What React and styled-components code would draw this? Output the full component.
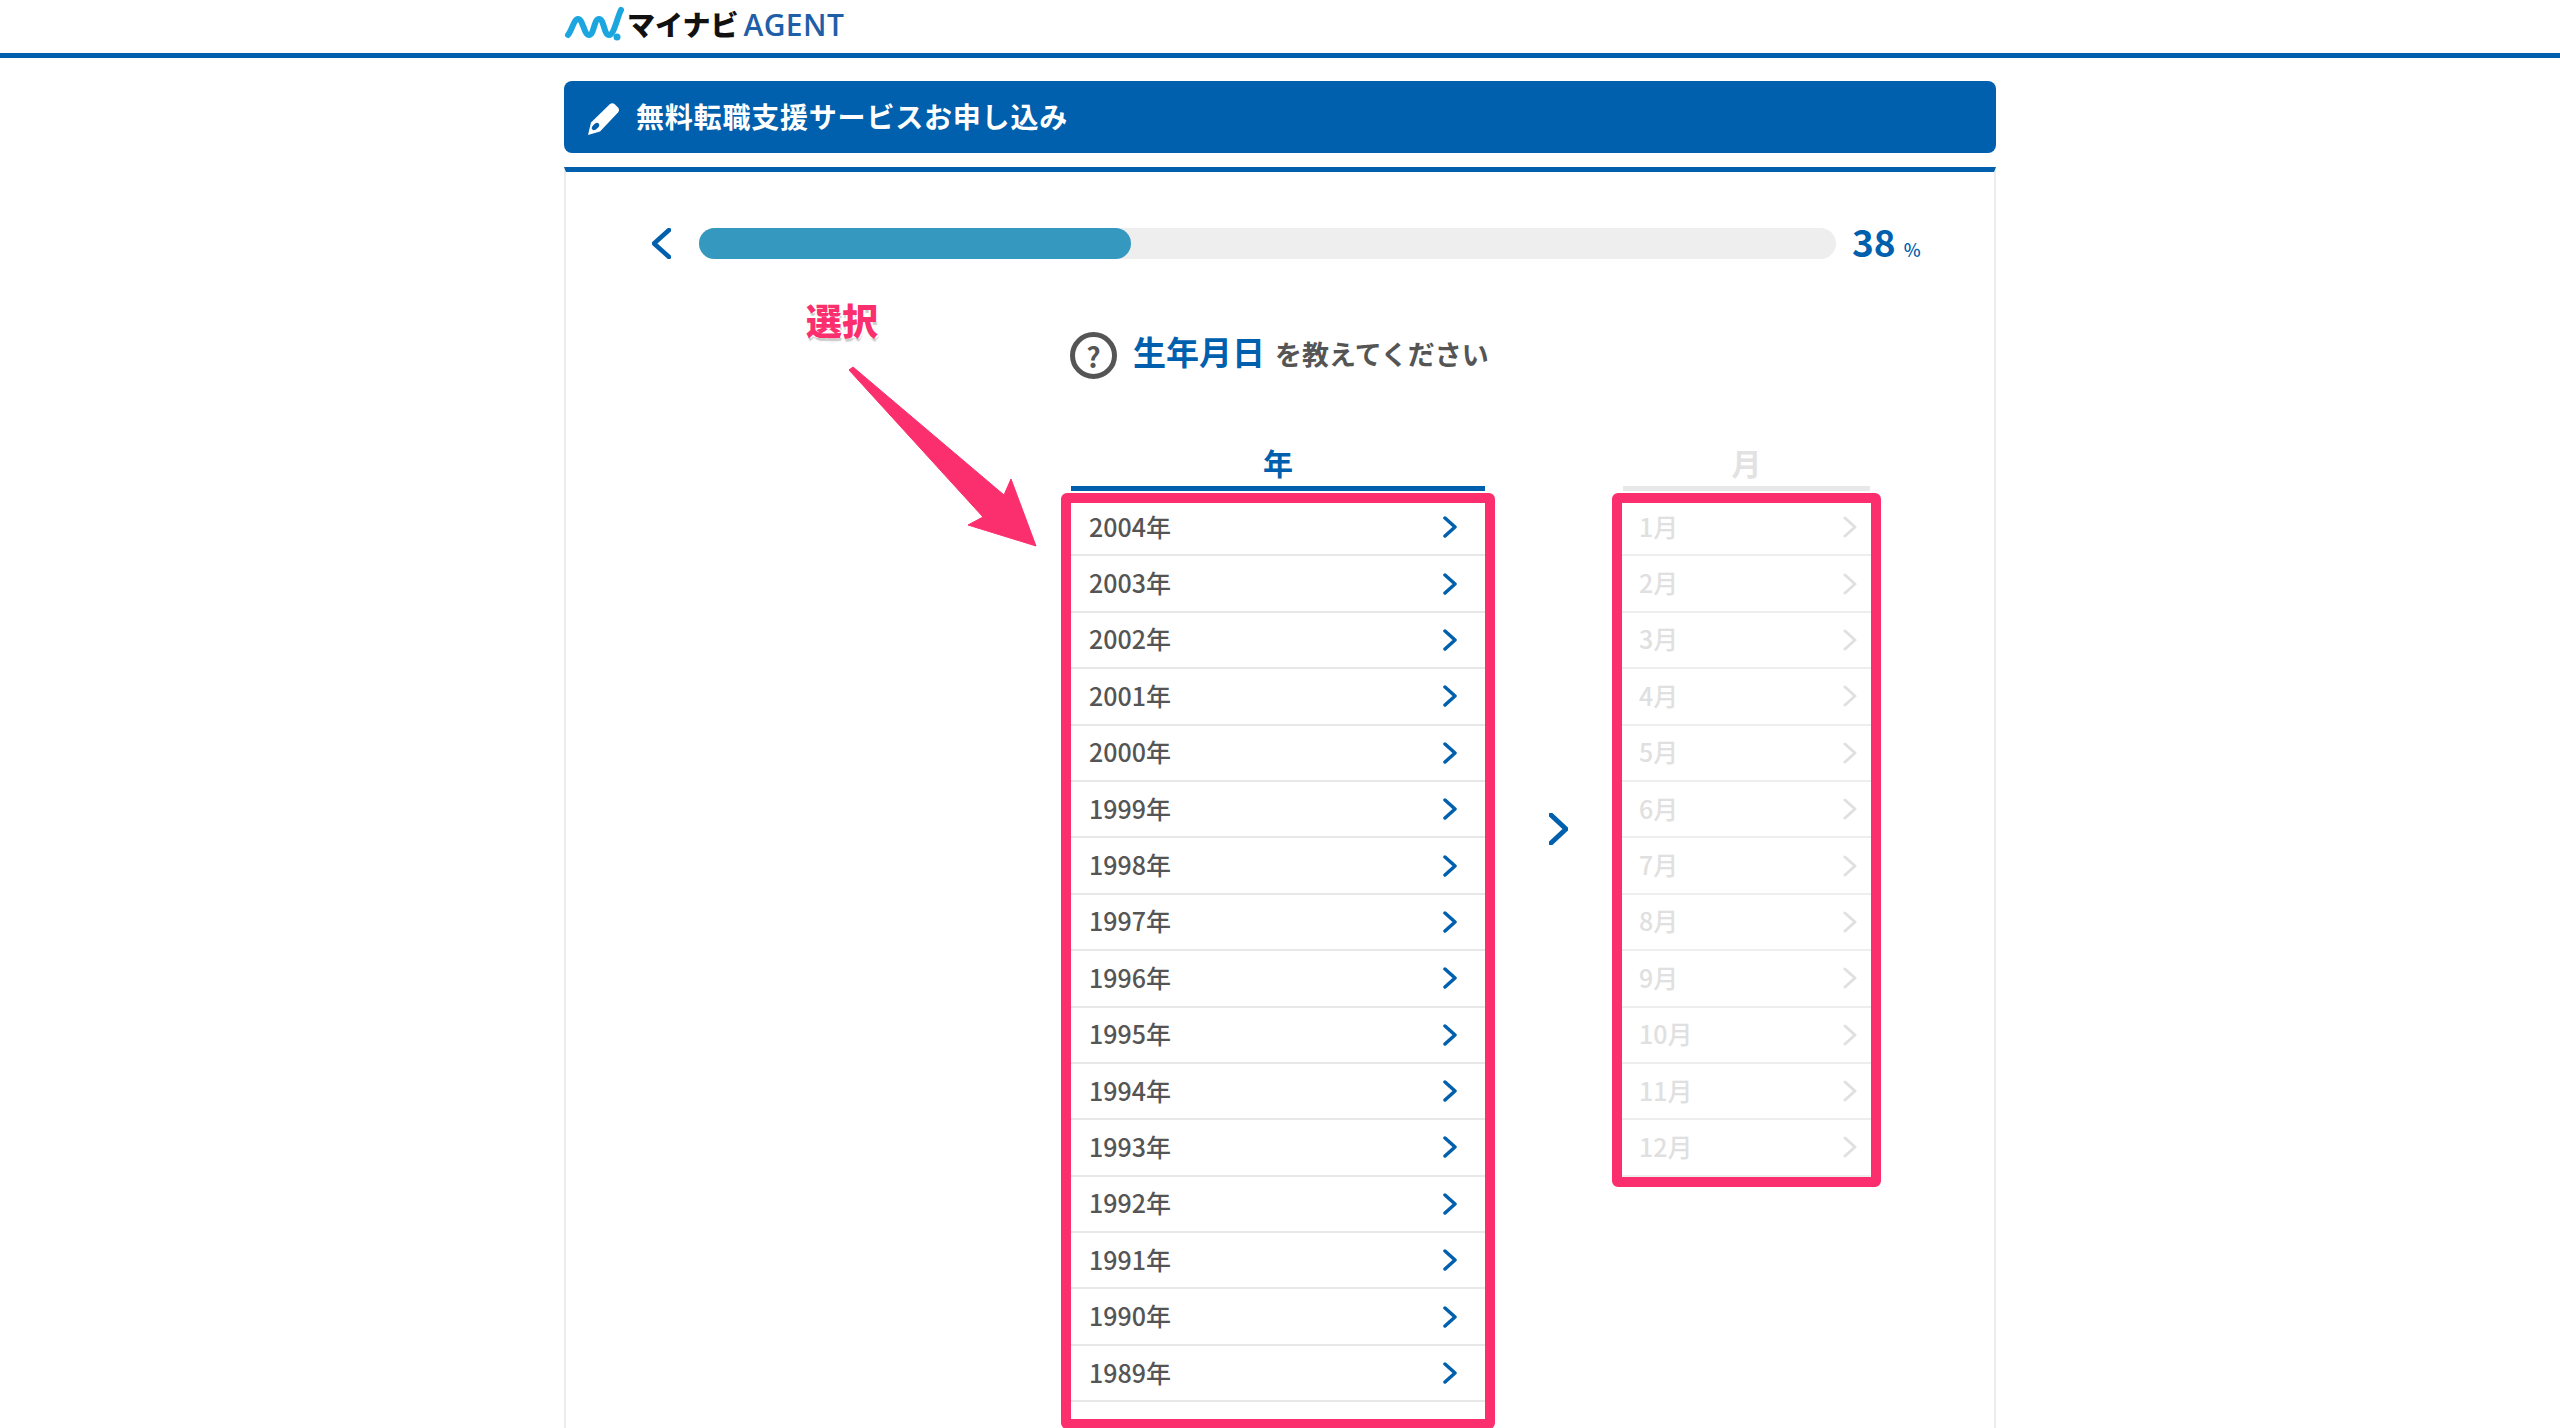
import React from 'react';
import styled, { createGlobalStyle } from 'styled-components';

const BLUE = '#0060ad';
const PINK = '#fb2f6e';
const FONT = '"Noto Sans CJK JP", "Noto Sans", sans-serif';

const GlobalStyle = createGlobalStyle`
    html, body {
        margin: 0;
        height: 1428px;
        overflow: hidden;
        background: #fff;
        font-family: ${FONT};
    }
    * {
        box-sizing: border-box;
    }
`;

const Header = styled.header`
    height: 58px;
    border-bottom: 5px solid ${BLUE};
`;

const HeaderInner = styled.div`
    display: flex;
    align-items: center;
    width: 1432px;
    height: 47px;
    margin: 0 auto;
`;

const LogoMark = styled.svg`
    width: 60px;
    height: 36px;
    flex-shrink: 0;
`;

const LogoName = styled.span`
    margin-left: 3px;
    font-size: 28px;
    font-weight: 900;
    line-height: 1;
    color: #111;
`;

const LogoAgent = styled.span`
    margin: 3px 0 0 5px;
    font-family: "Open Sans", sans-serif;
    font-size: 30px;
    font-weight: 600;
    line-height: 1;
    letter-spacing: 0.4px;
    color: #1f5fa8;
`;

const Main = styled.main`
    width: 1432px;
    margin: 23px auto 0;
`;

const TitleBar = styled.div`
    display: flex;
    align-items: center;
    gap: 16px;
    height: 72px;
    padding-left: 23px;
    border-radius: 8px;
    background-color: ${BLUE};
`;

const Pencil = styled.svg`
    width: 33px;
    height: 33px;
    margin-top: 2px;
`;

const TitleText = styled.h1`
    margin: -2px 0 0;
    font-size: 28px;
    font-weight: 700;
    letter-spacing: 0.8px;
    color: #fff;
`;

const Panel = styled.section`
    position: relative;
    height: 1261px;
    margin-top: 14px;
    overflow: hidden;
    border-top: 5px solid ${BLUE};
    border-left: 2px solid #ececec;
    border-right: 2px solid #ececec;
`;

const ProgressRow = styled.div`
    display: flex;
    align-items: center;
    height: 31px;
    margin-top: 56px;
    padding-left: 86px;
`;

const Track = styled.div`
    width: 1137px;
    height: 31px;
    margin-left: 28px;
    border-radius: 16px;
    background-color: #eee;
`;

const Fill = styled.div`
    height: 100%;
    border-radius: 16px;
    background-color: #3598bf;
`;

const Percent = styled.div`
    display: flex;
    align-items: baseline;
    margin: -4px 0 0 16px;
    font-size: 37px;
    font-weight: 700;
    line-height: 1;
    color: ${BLUE};
`;

const PercentUnit = styled.span`
    margin-left: 8px;
    font-size: 18px;
    font-weight: 500;
`;

const Question = styled.div`
    display: flex;
    align-items: center;
    height: 47px;
    margin: 73px 0 0 504px;
`;

const QuestionIcon = styled.div`
    display: flex;
    align-items: center;
    justify-content: center;
    width: 47px;
    height: 47px;
    border: 5px solid #555;
    border-radius: 50%;
    font-size: 28px;
    font-weight: 700;
    line-height: 1;
    color: #555;
`;

const QuestionStrong = styled.span`
    margin: -8px 0 0 16px;
    font-size: 33px;
    font-weight: 700;
    line-height: 1;
    color: ${BLUE};
`;

const QuestionRest = styled.span`
    margin: -5px 0 0 10px;
    font-size: 27px;
    font-weight: 700;
    line-height: 1;
    color: #555;
`;

const Columns = styled.div`
    display: flex;
    align-items: flex-start;
    margin: 68px 0 0 495px;
`;

const Column = styled.div`
    flex-shrink: 0;
    width: ${(p) => p.$width}px;
`;

const ColumnHead = styled.div`
    height: 44px;
    margin: 0 ${(p) => p.$inset}px;
    border-bottom: 5px solid ${(p) => (p.$off ? '#e8e8e8' : BLUE)};
    font-size: 30px;
    font-weight: 700;
    line-height: 31px;
    text-align: center;
    color: ${(p) => (p.$off ? '#e2e2e2' : BLUE)};
`;

const Frame = styled.div`
    margin-top: 2px;
    padding-bottom: ${(p) => p.$pad}px;
    border: 10px solid ${PINK};
    border-radius: 6px;
`;

const RowList = styled.ul`
    margin: -3px 0 0;
    padding: 0;
    list-style: none;
`;

const Row = styled.li`
    display: flex;
    align-items: center;
    justify-content: space-between;
    height: 56.4px;
    padding: ${(p) => (p.$off ? '0 14px 0 17px' : '0 28px 0 18px')};
    border-bottom: 2px solid ${(p) => (p.$off ? '#eee' : '#e8e8e8')};
    font-size: 25px;
    font-weight: 500;
    color: ${(p) => (p.$off ? '#e0e0e0' : '#555')};
`;

const RowLabel = styled.span`
    margin-top: -3px;
`;

const ColumnArrow = styled.div`
    flex-shrink: 0;
    width: 117px;
    padding: 366px 0 0 54px;
`;

const ChevronSvg = styled.svg`
    display: block;
    flex-shrink: 0;
    fill: none;
    stroke-linecap: round;
    stroke-linejoin: round;
`;

const Callout = styled.div`
    position: absolute;
    top: 126px;
    left: 240px;
    font-size: 36px;
    font-weight: 900;
    line-height: 1.2;
    color: ${PINK};
    text-shadow: 2px 0 0 #fff, -2px 0 0 #fff, 0 -2px 0 #fff, 1px 3px 1px #ccc;
`;

const CalloutArrow = styled.svg`
    position: absolute;
    top: 193px;
    left: 279px;
    width: 200px;
    height: 190px;
`;

const Chevron = ({ w, h, color, stroke, left }) => (
    <ChevronSvg width={w} height={h} viewBox={`0 0 ${w} ${h}`} stroke={color} strokeWidth={stroke}>
        {left ? (
            <polyline points={`${w - 2},2 2,${h / 2} ${w - 2},${h - 2}`} />
        ) : (
            <polyline points={`2,2 ${w - 2},${h / 2} 2,${h - 2}`} />
        )}
    </ChevronSvg>
);

const years = Array.from({ length: 16 }, (_, i) => 2004 - i);
const months = Array.from({ length: 12 }, (_, i) => i + 1);

const App = () => {
    return (
        <>
            <GlobalStyle />
            <Header>
                <HeaderInner>
                    <LogoMark viewBox="0 0 60 36">
                        <path
                            d="M4 29 C8 24 10 13 14 13 C19 13 20 29 25 29 C30 29 30 13 35 13 C40 13 40 29 45 29 C50 29 53 12 57 4"
                            fill="none"
                            stroke="#1ba6e0"
                            strokeWidth="6"
                            strokeLinecap="round"
                        />
                        <circle cx="53" cy="31" r="3.5" fill="#1ba6e0" />
                    </LogoMark>
                    <LogoName>マイナビ</LogoName>
                    <LogoAgent>AGENT</LogoAgent>
                </HeaderInner>
            </Header>
            <Main>
                <TitleBar>
                    <Pencil viewBox="0 0 33 33">
                        <path
                            d="M23 2 Q25.5 0.5 28 2.5 L31 5.5 Q33 8 31 10.5 L13 29.5 L1 33 L4 20.5 Z"
                            fill="#fff"
                        />
                        <ellipse cx="8.5" cy="24.5" rx="2.6" ry="4.4" transform="rotate(45 8.5 24.5)" fill={BLUE} />
                    </Pencil>
                    <TitleText>無料転職支援サービスお申し込み</TitleText>
                </TitleBar>
                <Panel>
                    <ProgressRow>
                        <Chevron w={19} h={31} color={BLUE} stroke={4.5} left />
                        <Track>
                            <Fill style={{ width: '38%' }} />
                        </Track>
                        <Percent>
                            38<PercentUnit>%</PercentUnit>
                        </Percent>
                    </ProgressRow>
                    <Question>
                        <QuestionIcon>?</QuestionIcon>
                        <QuestionStrong>生年月日</QuestionStrong>
                        <QuestionRest>を教えてください</QuestionRest>
                    </Question>
                    <Columns>
                        <Column $width={434}>
                            <ColumnHead $inset={10}>年</ColumnHead>
                            <Frame $pad={17}>
                                <RowList>
                                    {years.map((year) => (
                                        <Row key={year}>
                                            <RowLabel>{year}年</RowLabel>
                                            <Chevron w={14} h={22} color={BLUE} stroke={3.5} />
                                        </Row>
                                    ))}
                                </RowList>
                            </Frame>
                        </Column>
                        <ColumnArrow>
                            <Chevron w={19} h={32} color={BLUE} stroke={5} />
                        </ColumnArrow>
                        <Column $width={269}>
                            <ColumnHead $inset={11} $off>
                                月
                            </ColumnHead>
                            <Frame $pad={0}>
                                <RowList>
                                    {months.map((month) => (
                                        <Row key={month} $off>
                                            <RowLabel>{month}月</RowLabel>
                                            <Chevron w={14} h={22} color="#e0e0e0" stroke={3} />
                                        </Row>
                                    ))}
                                </RowList>
                            </Frame>
                        </Column>
                    </Columns>
                    <Callout>選択</Callout>
                    <CalloutArrow viewBox="845 365 200 190">
                        <path
                            d="M849 370 L853 367 L1004 495 L1011 479 L1036 546 L968 525 L983 517 Z"
                            fill={PINK}
                            stroke={PINK}
                            strokeLinejoin="round"
                        />
                    </CalloutArrow>
                </Panel>
            </Main>
        </>
    );
};

export default App;
